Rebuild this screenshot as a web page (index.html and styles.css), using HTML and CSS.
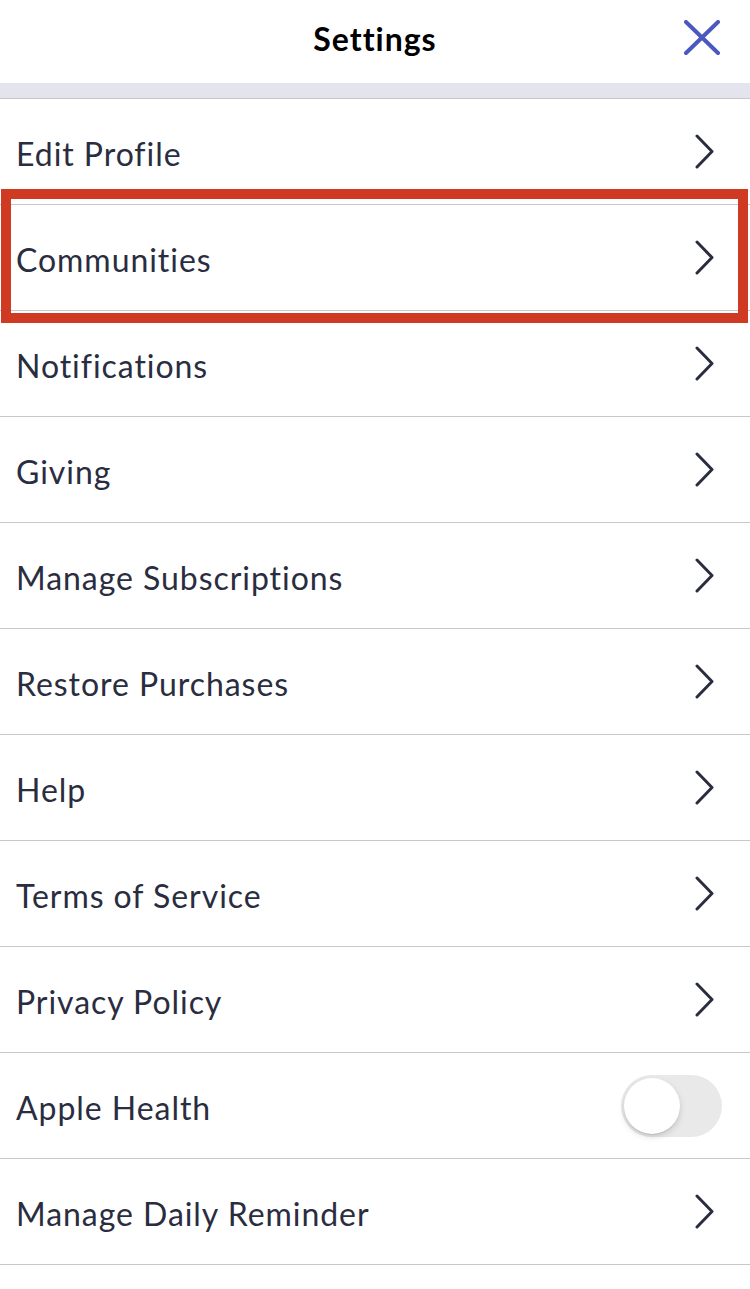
FILE: index.html
```html
<!DOCTYPE html>
<html lang="en">
<head>
    <meta charset="UTF-8">
    <meta name="viewport" content="width=device-width, initial-scale=1.0">
    <title>Settings</title>
    <link rel="stylesheet" href="styles.css">
</head>
<body>
    <div class="header">
        <h1>Settings</h1>
        <button class="close-btn" aria-label="Close">
            <svg width="36" height="36" viewBox="0 0 36 36">
                <path d="M2 2 L34 33 M34 2 L2 33" stroke="#4a58bf" stroke-width="4" stroke-linecap="round" fill="none"/>
            </svg>
        </button>
    </div>
    <div class="band"></div>

    <ul class="settings-list">
        <li class="row"><span>Edit Profile</span><svg class="chevron" width="21" height="35" viewBox="0 0 21 35"><path d="M3 2 L18 17.5 L3 33" stroke="#2a2d40" stroke-width="3" stroke-linecap="round" stroke-linejoin="round" fill="none"/></svg></li>
        <li class="row highlighted"><span>Communities</span><svg class="chevron" width="21" height="35" viewBox="0 0 21 35"><path d="M3 2 L18 17.5 L3 33" stroke="#2a2d40" stroke-width="3" stroke-linecap="round" stroke-linejoin="round" fill="none"/></svg></li>
        <li class="row"><span>Notifications</span><svg class="chevron" width="21" height="35" viewBox="0 0 21 35"><path d="M3 2 L18 17.5 L3 33" stroke="#2a2d40" stroke-width="3" stroke-linecap="round" stroke-linejoin="round" fill="none"/></svg></li>
        <li class="row"><span>Giving</span><svg class="chevron" width="21" height="35" viewBox="0 0 21 35"><path d="M3 2 L18 17.5 L3 33" stroke="#2a2d40" stroke-width="3" stroke-linecap="round" stroke-linejoin="round" fill="none"/></svg></li>
        <li class="row"><span>Manage Subscriptions</span><svg class="chevron" width="21" height="35" viewBox="0 0 21 35"><path d="M3 2 L18 17.5 L3 33" stroke="#2a2d40" stroke-width="3" stroke-linecap="round" stroke-linejoin="round" fill="none"/></svg></li>
        <li class="row"><span>Restore Purchases</span><svg class="chevron" width="21" height="35" viewBox="0 0 21 35"><path d="M3 2 L18 17.5 L3 33" stroke="#2a2d40" stroke-width="3" stroke-linecap="round" stroke-linejoin="round" fill="none"/></svg></li>
        <li class="row"><span>Help</span><svg class="chevron" width="21" height="35" viewBox="0 0 21 35"><path d="M3 2 L18 17.5 L3 33" stroke="#2a2d40" stroke-width="3" stroke-linecap="round" stroke-linejoin="round" fill="none"/></svg></li>
        <li class="row"><span>Terms of Service</span><svg class="chevron" width="21" height="35" viewBox="0 0 21 35"><path d="M3 2 L18 17.5 L3 33" stroke="#2a2d40" stroke-width="3" stroke-linecap="round" stroke-linejoin="round" fill="none"/></svg></li>
        <li class="row"><span>Privacy Policy</span><svg class="chevron" width="21" height="35" viewBox="0 0 21 35"><path d="M3 2 L18 17.5 L3 33" stroke="#2a2d40" stroke-width="3" stroke-linecap="round" stroke-linejoin="round" fill="none"/></svg></li>
        <li class="row"><span>Apple Health</span><div class="toggle"><div class="knob"></div></div></li>
        <li class="row"><span>Manage Daily Reminder</span><svg class="chevron" width="21" height="35" viewBox="0 0 21 35"><path d="M3 2 L18 17.5 L3 33" stroke="#2a2d40" stroke-width="3" stroke-linecap="round" stroke-linejoin="round" fill="none"/></svg></li>
    </ul>
</body>
</html>
```

FILE: styles.css
```css
body {
    margin: 0;
    padding: 0;
    font-family: Lato, "Open Sans", sans-serif;
    background: #fff;
    color: #2a2d40;
}
.header {
    position: relative;
    height: 83px;
    display: flex;
    justify-content: center;
    align-items: center;
}
.header h1 {
    margin: 0;
    font-size: 32px;
    font-weight: 700;
    letter-spacing: 1px;
    color: #000;
    padding-bottom: 6px;
}
.close-btn {
    position: absolute;
    right: 30px;
    top: 20px;
    background: none;
    border: none;
    padding: 0;
    width: 36px;
    height: 36px;
    cursor: pointer;
}
.close-btn svg {
    display: block;
}
.band {
    height: 15px;
    background: #e4e4ee;
    border-bottom: 1px solid #c6c6cc;
}
.settings-list {
    list-style: none;
    margin: 0;
    padding: 0;
}
.row {
    position: relative;
    height: 105px;
    border-bottom: 1px solid #c8c8cc;
    display: flex;
    align-items: center;
    justify-content: space-between;
    padding: 0 35px 0 16px;
    font-size: 32px;
}
.row span {
    padding-top: 4px;
    letter-spacing: 0.95px;
}
.chevron {
    display: block;
}
.highlighted::after {
    content: "";
    position: absolute;
    left: 1px;
    right: 2px;
    top: -16px;
    bottom: -13px;
    border: 10px solid #d13a22;
    pointer-events: none;
}
.toggle {
    width: 101px;
    height: 62px;
    border-radius: 31px;
    background: #e9e9ea;
    margin-right: -7px;
    position: relative;
}
.knob {
    position: absolute;
    left: 3px;
    top: 3px;
    width: 56px;
    height: 56px;
    border-radius: 50%;
    background: #fff;
    box-shadow: 0 3px 6px rgba(0, 0, 0, 0.15), 0 1px 1px rgba(0, 0, 0, 0.08);
}
```
